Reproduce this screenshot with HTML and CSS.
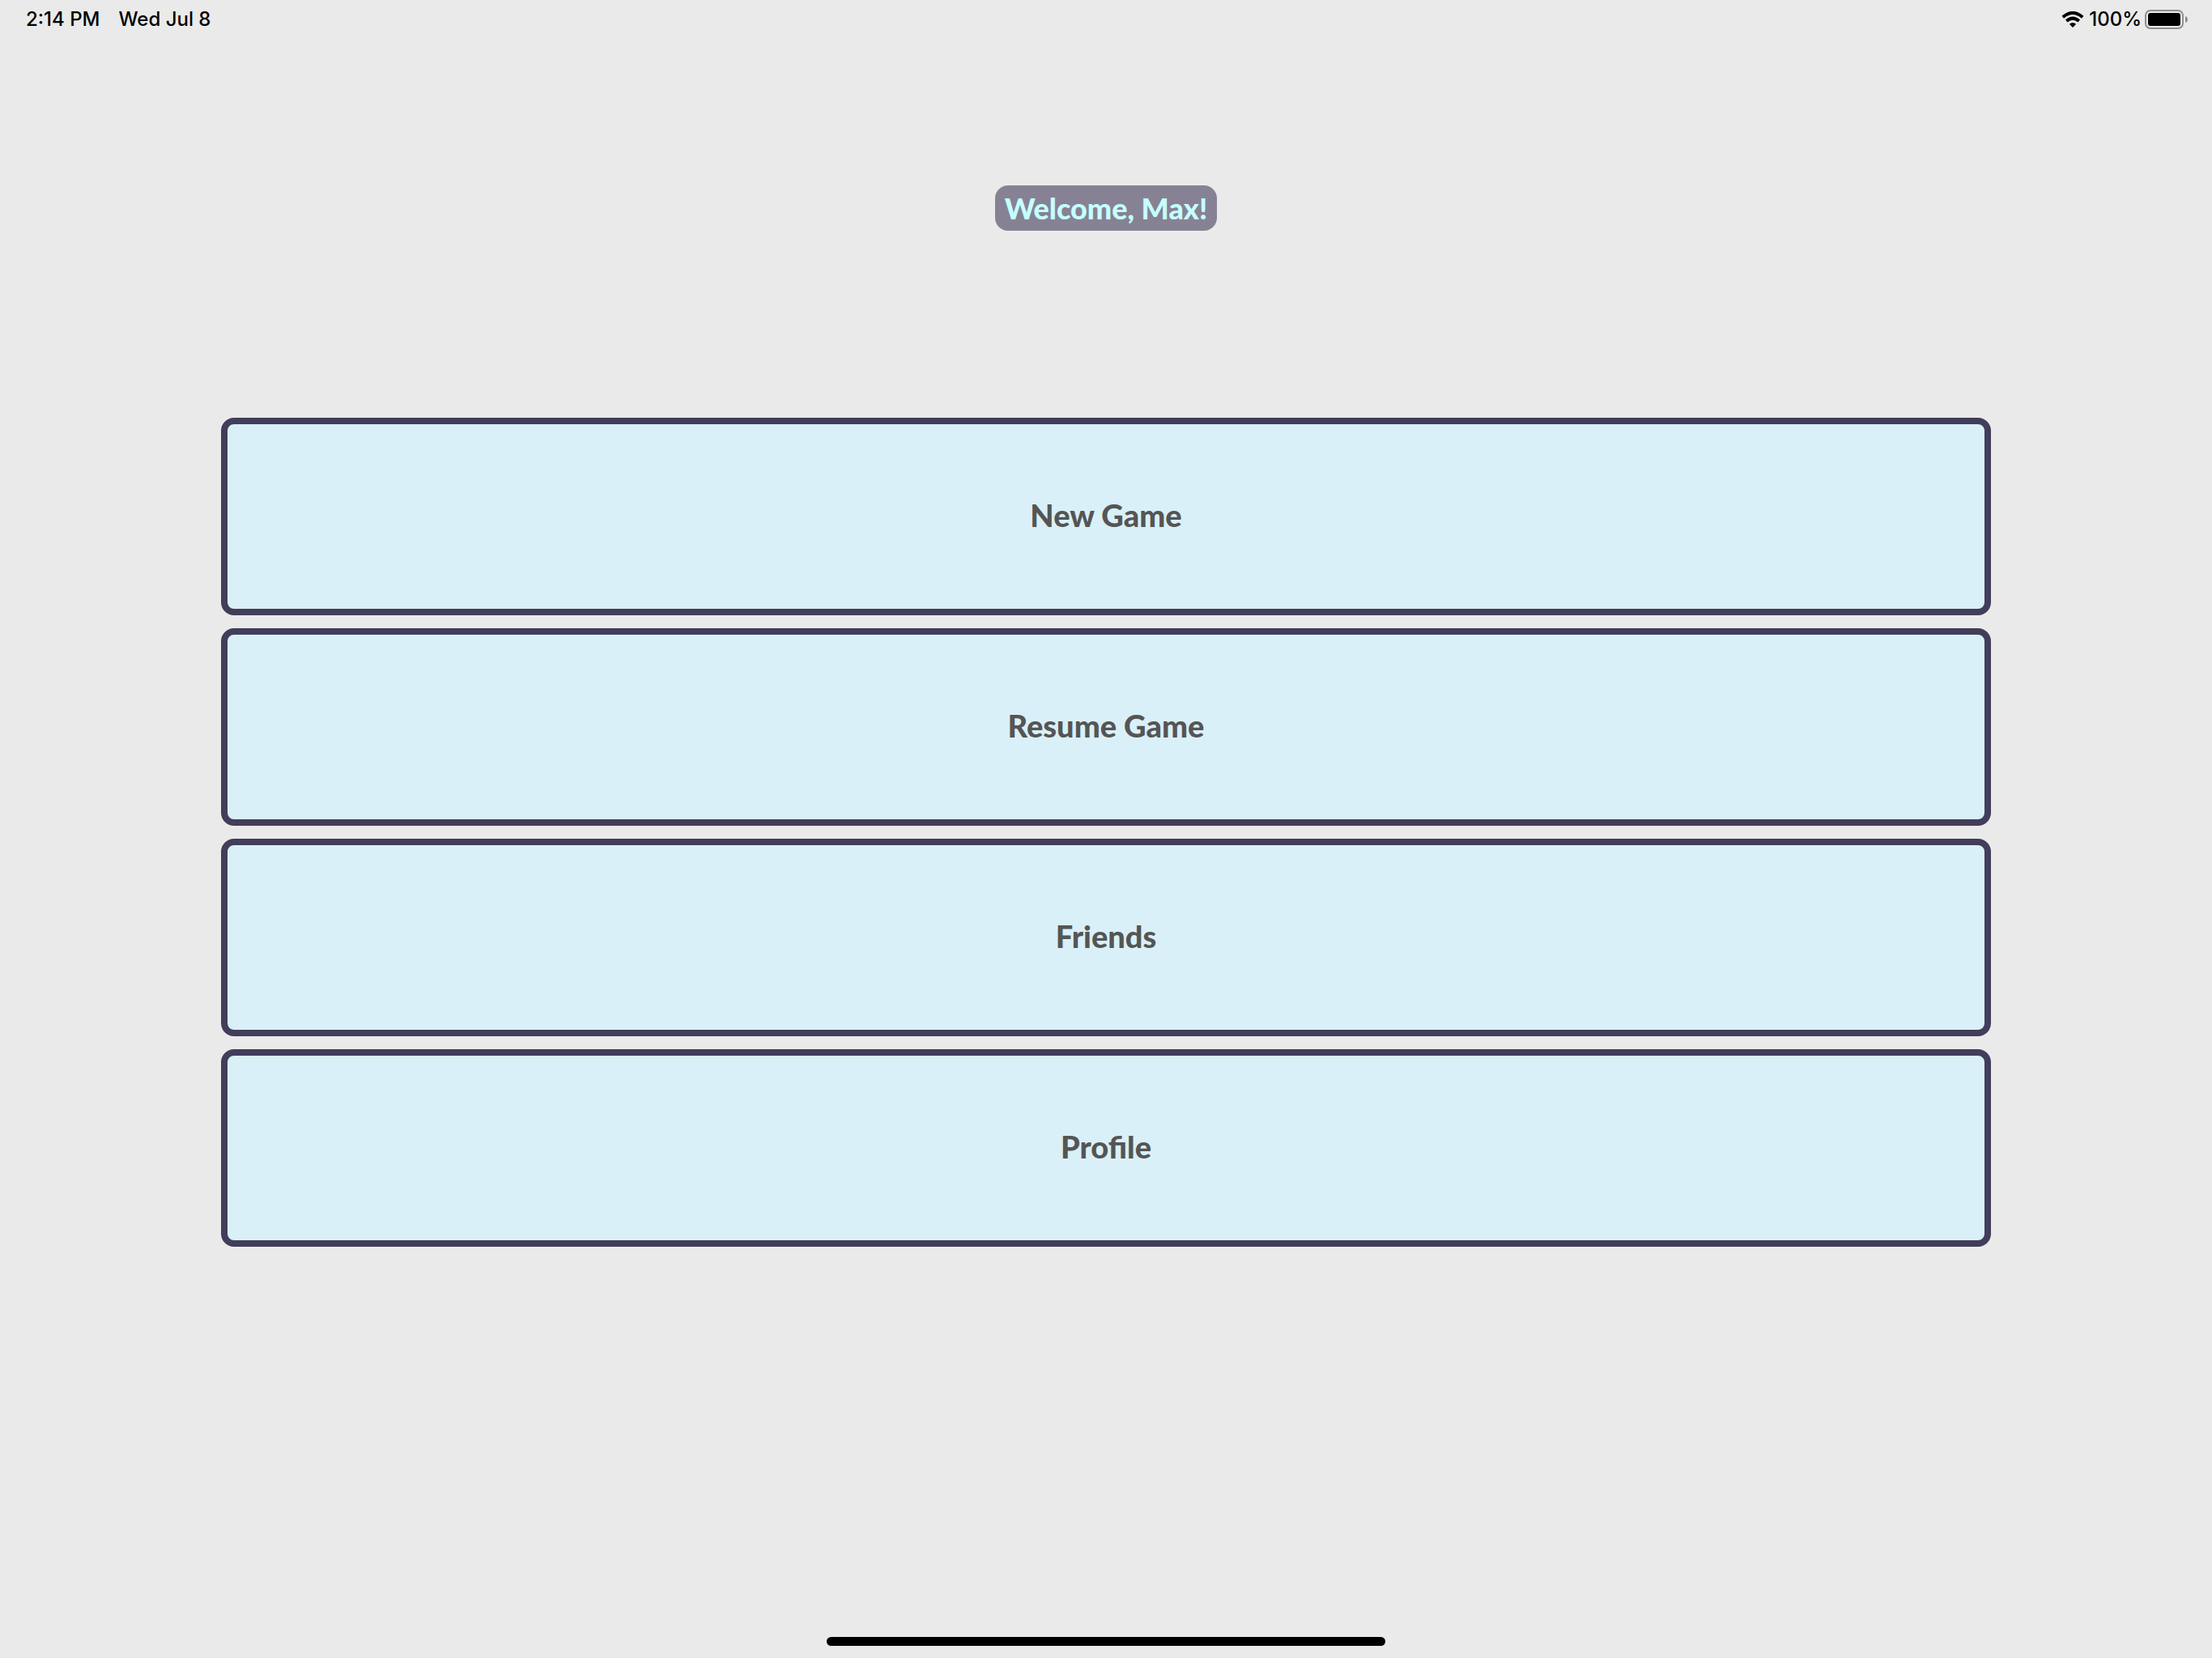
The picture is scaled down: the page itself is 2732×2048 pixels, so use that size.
FILE: index.html
```html
<!DOCTYPE html>
<html lang="en">
<head>
  <meta charset="utf-8">
  <meta name="viewport" content="width=device-width, initial-scale=1">
  <title>Main Menu</title>
  <link rel="stylesheet" href="styles.css">
</head>
<body>
  <header class="status-bar">
    <div class="status-group status-left">
      <span>2:14 PM</span>
      <span>Wed Jul 8</span>
    </div>
    <div class="status-group status-right">
      <svg class="wifi" viewBox="0 0 28 20" width="28" height="20" aria-label="Wi-Fi" role="img">
        <g fill="none" stroke="#000" stroke-width="4">
          <path d="M1.8 7.2Q14-3.2 26.2 7.2"/>
          <path d="M6.3 12Q14 5.2 21.7 12"/>
        </g>
        <path d="M14 20L9.8 15.8Q14 12.4 18.2 15.8Z"/>
      </svg>
      <span class="battery-level">100%</span>
      <svg class="battery" viewBox="0 0 54 24" width="54" height="24" aria-label="Battery full" role="img">
        <rect x="1" y="1" width="46" height="22" rx="6" fill="none" stroke="#8f8f8f" stroke-width="2"/>
        <rect x="4" y="4" width="40" height="16" rx="3"/>
        <path d="M50 8Q53 9 53 12T50 16Z" fill="#8f8f8f"/>
      </svg>
    </div>
  </header>
  <main class="menu">
    <h1 class="welcome">Welcome, Max!</h1>
    <nav class="menu-list" aria-label="Main menu">
      <button class="menu-button" type="button">New Game</button>
      <button class="menu-button" type="button">Resume Game</button>
      <button class="menu-button" type="button">Friends</button>
      <button class="menu-button" type="button">Profile</button>
    </nav>
  </main>
  <footer class="home-area"><div class="home-indicator"></div></footer>
</body>
</html>
```
FILE: styles.css
```css
* {
  box-sizing: border-box;
}

body {
  display: flex;
  flex-direction: column;
  min-height: 100vh;
  margin: 0;
  background: #eaeaea;
  color: #000;
  font-family: Inter, sans-serif;
}

.status-bar {
  display: flex;
  justify-content: space-between;
  align-items: center;
  height: 48px;
  padding: 0 29px 0 32px;
  font-size: 24px;
  font-weight: 500;
  line-height: 48px;
}

.status-group {
  display: flex;
  align-items: center;
}

.status-left {
  gap: 23px;
}

.status-right {
  gap: 4px;
}

.wifi {
  margin-right: 2px;
}

.wifi,
.battery {
  display: block;
}

.menu {
  display: flex;
  flex: 1;
  flex-direction: column;
  align-items: center;
  padding-top: 181px;
  font-family: "Marker Felt", Lato, sans-serif;
}

.welcome {
  margin: 0 0 231px;
  padding: 0 12px;
  border-radius: 16px;
  background: #868293;
  color: #c5ffff;
  font-size: 36px;
  font-weight: 900;
  line-height: 56px;
}

.menu-list {
  display: flex;
  flex-direction: column;
  gap: 16px;
  width: 80%;
}

.menu-button {
  width: 100%;
  padding: 88px 16px 92px;
  border: 8px solid #423d5a;
  border-radius: 16px;
  background: #d9f0f8;
  color: #555;
  font-family: inherit;
  font-size: 38px;
  font-weight: 900;
  line-height: 48px;
}

.home-area {
  display: flex;
  justify-content: center;
  padding-bottom: 15px;
}

.home-indicator {
  width: 690px;
  max-width: 60%;
  height: 11px;
  border-radius: 6px;
  background: #000;
}
```
